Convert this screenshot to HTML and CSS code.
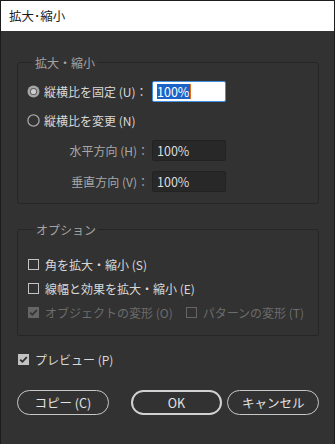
FILE: index.html
```html
<!DOCTYPE html>
<html lang="ja">
<head>
  <meta charset="UTF-8" />
  <meta name="viewport" content="width=device-width, initial-scale=1.0"/>
  <title>拡大・縮小</title>
  <link rel="stylesheet" href="styles.css">
</head>
<body>
  <div class="window">
    <div class="titlebar">拡大･縮小</div>

    <div class="dialog">
      <fieldset class="group scale-group">
        <legend>拡大・縮小</legend>

        <div class="scale-grid">
          <label class="choice">
            <svg class="radio" width="13" height="13" viewBox="0 0 13 13">
              <circle cx="6.5" cy="6.5" r="6" fill="#a6a6a6"/>
              <circle cx="6.5" cy="6.5" r="3.6" fill="#5c5c5c"/>
              <circle cx="6.5" cy="6.5" r="2.6" fill="#cfcfcf"/>
            </svg>
            <span>縦横比を固定 (U)：</span>
          </label>
          <div class="field active"><span class="sel">100%</span><span class="caret"></span></div>

          <label class="choice wide">
            <svg class="radio" width="13" height="13" viewBox="0 0 13 13">
              <circle cx="6.5" cy="6.5" r="5.6" fill="none" stroke="#a6a6a6" stroke-width="1.3"/>
            </svg>
            <span>縦横比を変更 (N)</span>
          </label>

          <span class="sub-label">水平方向 (H)：</span>
          <div class="field">100%</div>

          <span class="sub-label">垂直方向 (V)：</span>
          <div class="field">100%</div>
        </div>
      </fieldset>

      <fieldset class="group option-group">
        <legend>オプション</legend>

        <label class="check-row">
          <span class="box"></span>
          <span>角を拡大・縮小 (S)</span>
        </label>
        <label class="check-row">
          <span class="box"></span>
          <span>線幅と効果を拡大・縮小 (E)</span>
        </label>
        <div class="check-row disabled">
          <span class="box checked">
            <svg width="11" height="11" viewBox="0 0 11 11"><path d="M2.2 5.6 L4.4 7.8 L8.8 3.2" fill="none" stroke="#333" stroke-width="1.8"/></svg>
          </span>
          <span>オブジェクトの変形 (O)</span>
          <span class="box pattern-box"></span>
          <span>パターンの変形 (T)</span>
        </div>
      </fieldset>

      <label class="check-row preview">
        <span class="box checked">
          <svg width="11" height="11" viewBox="0 0 11 11"><path d="M2.2 5.6 L4.4 7.8 L8.8 3.2" fill="none" stroke="#2e2e2e" stroke-width="1.8"/></svg>
        </span>
        <span>プレビュー (P)</span>
      </label>

      <div class="buttons">
        <button class="btn">コピー (C)</button>
        <button class="btn primary">OK</button>
        <button class="btn">キャンセル</button>
      </div>
    </div>
  </div>
</body>
</html>
```

FILE: styles.css
```css
* {
  box-sizing: border-box;
}
body {
  margin: 0;
  background: #323232;
  font-family: "Noto Sans CJK JP", "Noto Sans", sans-serif;
  font-size: 12px;
}
.window {
  width: 335px;
  height: 444px;
  background: #323232;
  border: 1px solid #1c1c1c;
  border-bottom: none;
  overflow: hidden;
}
.titlebar {
  height: 30px;
  background: #fff;
  color: #1a1a1a;
  padding: 6px 0 0 8px;
  line-height: 17px;
  font-size: 12.5px;
}
.dialog {
  padding: 0 15px 0 16px;
}
.group {
  margin: 0;
  border: 1px solid #262626;
  border-radius: 3px;
  min-width: 0;
}
.group legend {
  color: #a3a3a3;
  padding: 0 2px;
  margin-left: 6px;
  line-height: 17px;
}
.scale-group {
  margin-top: 23px;
  padding: 10px 0 14px 9px;
}
.scale-grid {
  display: grid;
  grid-template-columns: 125px 74px;
  grid-auto-rows: 21px;
  row-gap: 8px;
  align-items: center;
}
.scale-grid > :nth-child(3) {
  margin-top: -1px;
}
.scale-grid > :nth-child(4),
.scale-grid > :nth-child(5) {
  margin-top: 1px;
}
.scale-grid > :nth-child(6),
.scale-grid > :nth-child(7) {
  margin-top: 6px;
}
.choice {
  display: flex;
  align-items: center;
  gap: 4px;
  color: #d8d8d8;
  white-space: nowrap;
}
.choice.wide {
  grid-column: 1 / 3;
}
.radio {
  flex: none;
}
.sub-label {
  color: #a8a8a8;
  text-align: right;
  padding-right: 3px;
  white-space: nowrap;
}
.field {
  height: 21px;
  background: #282828;
  border: 1px solid #222;
  border-radius: 2px;
  color: #dcdcdc;
  padding: 0 0 0 4px;
  line-height: 19px;
  font-size: 12.5px;
  display: flex;
  align-items: center;
}
.field.active {
  background: #fff;
  border-color: #3f8fe4;
}
.field .sel {
  background: #1b63c6;
  color: #fff;
  line-height: 15px;
  padding: 0 1px 0 0;
}
.field .caret {
  width: 1px;
  height: 15px;
  background: #e0701f;
}
.option-group {
  margin-top: 17px;
  padding: 14px 0 11px 10px;
}
.check-row {
  display: flex;
  align-items: center;
  height: 24px;
  color: #d8d8d8;
  white-space: nowrap;
}
.check-row .box {
  flex: none;
  width: 11px;
  height: 11px;
  border: 1px solid #c4c4c4;
  margin-right: 6px;
  display: flex;
}
.check-row .box.checked {
  background: #c2c2c2;
  border-color: #c2c2c2;
}
.check-row .box.checked svg {
  margin: -1px;
}
.check-row.disabled {
  color: #6c6c6c;
}
.check-row.disabled .box {
  border-color: #666;
}
.check-row.disabled .box.checked {
  background: #656565;
  border-color: #656565;
}
.check-row.disabled .pattern-box {
  margin-left: 13px;
}
.preview {
  margin-top: 11px;
  padding-left: 1px;
}
.buttons {
  display: flex;
  margin-top: 19px;
}
.btn {
  height: 25px;
  width: 92px;
  border: 1.5px solid #c8c8c8;
  border-radius: 13px;
  background: transparent;
  color: #e2e2e2;
  font-family: inherit;
  font-size: 12.5px;
  padding: 0;
  cursor: pointer;
}
.btn.primary {
  border: 2px solid #d2d2d2;
  margin-left: 22px;
  margin-right: 5px;
}
```
